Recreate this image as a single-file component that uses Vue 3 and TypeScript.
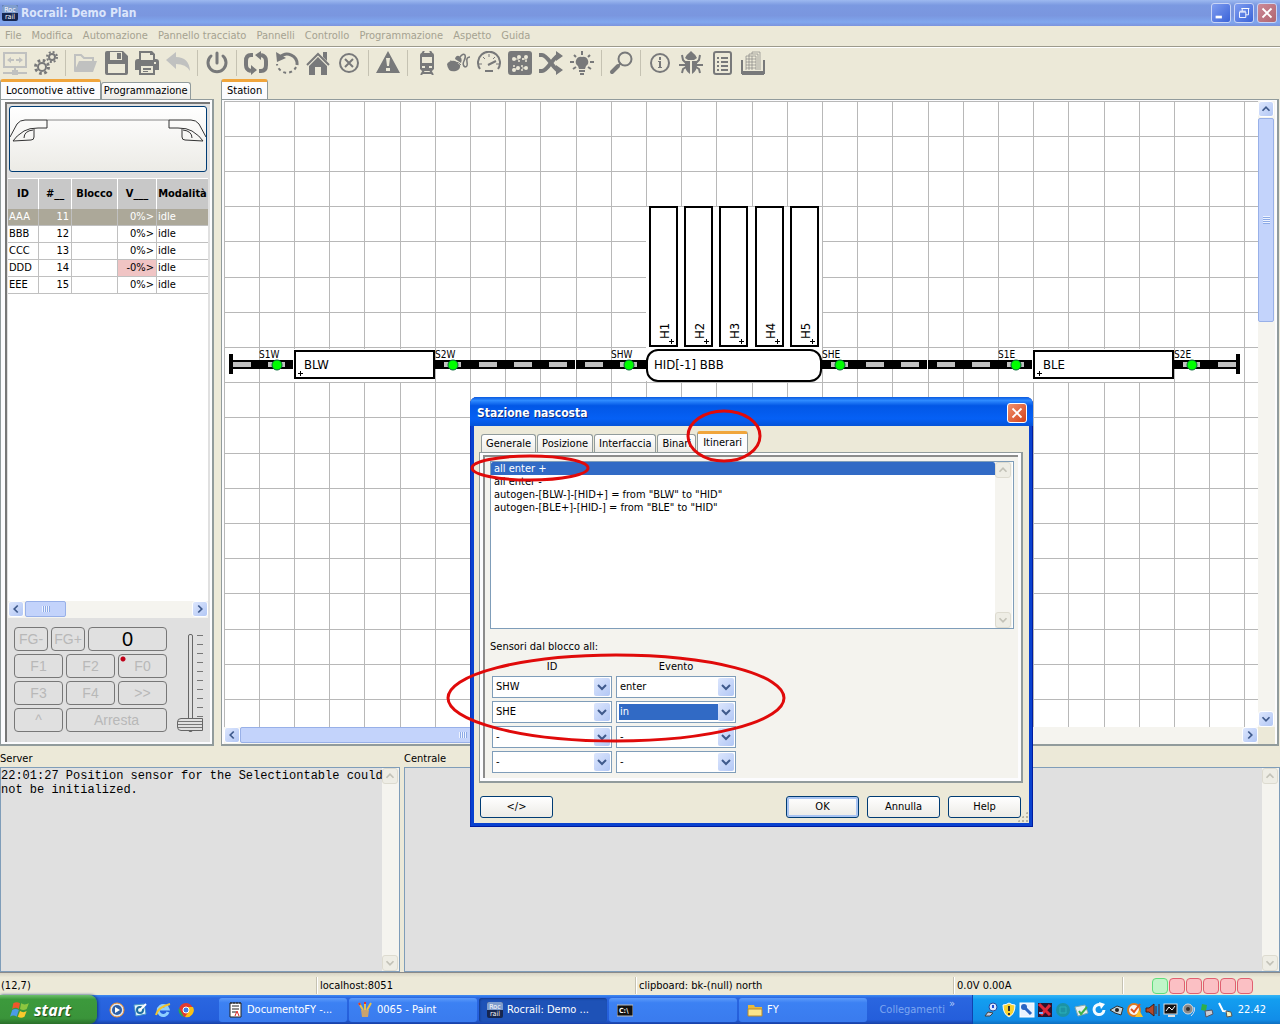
<script setup lang="ts">
import { ref } from 'vue'

interface Tool { name: string; art?: string; light?: boolean; sep?: boolean }
interface Loco { id: string; addr: number; block: string; v: string; mode: string; warn?: boolean }

const menus = ['File', 'Modifica', 'Automazione', 'Pannello tracciato', 'Pannelli', 'Controllo', 'Programmazione', 'Aspetto', 'Guida']

const line = 'fill="none" stroke="currentColor"'

const tools: Tool[] = [
  { name: 'Connetti', light: true, art: `<path ${line} stroke-width="2" d="M1 2h22v14H1zM12 16v5"/><path ${line} stroke-width="2" d="M0 22h24"/><rect x="9" y="19" width="6" height="5"/><path d="M4 9l4-3v2h3v2H8v2zM20 9l-4-3v2h-3v2h3v2z"/>` },
  { name: 'Impostazioni', art: `<circle cx="8" cy="16" r="4" ${line} stroke-width="2"/><circle cx="8" cy="16" r="6.500" ${line} stroke-width="3" stroke-dasharray="2.600 2.500"/><circle cx="18" cy="6" r="3" ${line} stroke-width="2"/><circle cx="18" cy="6" r="5" ${line} stroke-width="2" stroke-dasharray="2 1.930"/>` },
  { name: '', sep: true },
  { name: 'Apri', light: true, art: `<path ${line} stroke-width="2" d="M2 20V4h6l3 3h9v4"/><path d="M1 21l5-11h18l-4 11z"/>` },
  { name: 'Salva', art: `<path fill-rule="evenodd" d="M1 2q0-2 2-2h16l5 5v17q0 2-2 2H3q-2 0-2-2zM6 1v8h12V1zM4 13v9h17v-9z"/><path d="M13 2h4v6h-4z"/>` },
  { name: 'Stampa', art: `<path fill-rule="evenodd" d="M4 0h13l3 3v5h1q3 0 3 3v8h-4v5H4v-5H0v-8q0-3 3-3h1zM6 2v7h12V4h-3V2zM6 15v7h12v-7z"/><path d="M8 17h8v2H8zM8 20h5v1H8z"/><path fill="#ece9d8" d="M19 11h2v2h-2z"/>` },
  { name: 'Annulla', light: true, art: `<path d="M0 9l10-8v5q13 0 14 14-4-7-14-7v5z"/>` },
  { name: '', sep: true },
  { name: 'Alimentazione', art: `<path ${line} stroke-width="3" stroke-linecap="round" d="M6 5a9 9 0 1 0 12 0M12 2v10"/>` },
  { name: '', sep: true },
  { name: 'Modo automatico', art: `<path ${line} stroke-width="4" d="M9 4H7q-5 0-5 6v4q0 5 5 6M15 20h2q5 0 5-6v-4q0-5-5-6"/><path d="M7 14v10l6-5zM17 0v9l-6-5z"/>` },
  { name: 'Ripristina', art: `<path ${line} stroke-width="3" d="M5 6a10 10 0 0 1 17 8"/><path ${line} stroke-width="2" stroke-dasharray="3 3" d="M21 16a10 10 0 0 1-19-3"/><path d="M1 1l1 10 9-4z"/>` },
  { name: 'Casa', art: `<path ${line} stroke-width="2" d="M1 14L12 3l11 11"/><path d="M17 1h4v9l-4-4zM3 15l9-9 9 9v9h-6v-8H9v8H3z"/>` },
  { name: 'Stop', art: `<circle cx="12" cy="12" r="9" ${line} stroke-width="2"/><path ${line} stroke-width="2" d="M8 8l8 8M16 8l-8 8"/>` },
  { name: '', sep: true },
  { name: 'Emergenza', art: `<path fill-rule="evenodd" d="M12 0l12 22H0zM10 7l1 8h2l1-8zM10 17v3h4v-3z"/>` },
  { name: '', sep: true },
  { name: 'Locomotive', art: `<path ${line} stroke-width="2" d="M7 3l2-3M17 3l-2-3M6 24l3-5M18 24l-3-5M7 22h10"/><path fill-rule="evenodd" d="M7 2h10q2 0 2 2v14l-2 2H7l-2-2V4q0-2 2-2zM7 6v6h10V6zM7 15v2h3v-2zM14 15v2h3v-2z"/>` },
  { name: 'Mouse', art: `<path ${line} stroke-width="1.500" d="M14 6q3-4 5-2 1 2-1 6t1 6q3 0 2-5t3-5"/><path d="M1 13q3-4 8-3l5 4q1 4-4 6-8 2-9-7z"/><path d="M9 8q1-4 4-3 4 2 2 7z"/><path ${line} stroke="#ece9d8" d="M4 10l5 1q4 0 6 3M9 11q-2 2-2 5"/>` },
  { name: 'Velocità', art: `<path ${line} stroke-width="2" d="M3 18a11 11 0 1 1 18 0"/><path ${line} stroke-width="2" d="M11 14l8-4M8 20h8"/><path ${line} d="M2 13h3M6 6l2 2M12 3v3M18 6l-2 2M19 13h3"/>` },
  { name: 'Scambi', art: `<rect width="24" height="24" rx="3"/><g fill="#ece9d8"><circle cx="6" cy="8" r="2"/><circle cx="11" cy="6" r="2"/><circle cx="11" cy="10" r="1"/><circle cx="15" cy="8" r="1"/><circle cx="18" cy="6" r="2"/><circle cx="18" cy="10" r="1"/><circle cx="6" cy="15" r="1"/><circle cx="6" cy="19" r="2"/><circle cx="10" cy="17" r="2"/><circle cx="14" cy="15" r="1"/><circle cx="18" cy="17" r="2"/><circle cx="14" cy="19" r="1"/></g><path stroke="#ece9d8" d="M6 8h5M14 8h5M5 18h6M14 17h5"/>` },
  { name: 'Itinerari', art: `<path ${line} stroke-width="4" d="M0 4h3q3 0 9 8t8 8M0 20h3q3 0 9-8t8-8"/><path d="M17 0l7 5-7 5zM17 14l7 5-7 5z"/>` },
  { name: 'Luci', art: `<path d="M12 6a5 5 0 0 1 4 9l-1 3H9l-1-3a5 5 0 0 1 4-9zM9 19h6v2H9zM10 22h4v2h-4z"/><path ${line} stroke-width="2" d="M12 0v4M4 4l2 2M20 4l-2 2M0 11h4M20 11h4M3 18l3-2M21 18l-3-2"/>` },
  { name: '', sep: true },
  { name: 'Cerca', art: `<circle cx="16" cy="8" r="6.500" ${line} stroke-width="2"/><path ${line} stroke-width="4" stroke-linecap="round" d="M3 21l6-6"/><path ${line} stroke-width="2" d="M9 15l3-3"/>` },
  { name: '', sep: true },
  { name: 'Informazioni', art: `<circle cx="12" cy="12" r="9" ${line} stroke-width="2"/><path d="M11 6h2v3h-2zM10 10h3v6h1v1h-4v-1h1v-5h-1z"/>` },
  { name: 'Debug', art: `<path d="M6 7q1-3 4-5l2-2 2 2q3 2 4 5l-3 2H9zM6 10h5v13q-5-3-5-9zM13 10h5v4q0 6-5 9z"/><path ${line} stroke-width="2" d="M3 4l1 5 3 3M21 4l-1 5-3 3M0 14h7M17 14h7M3 22l1-4 3-2M21 22l-1-4-3-2"/>` },
  { name: 'Registro', art: `<rect x="4" y="1" width="17" height="22" rx="2" ${line} stroke-width="2"/><path ${line} stroke-width="2" stroke-dasharray="2 2 7 20" d="M7 7h11M7 11h11M7 15h11M7 19h11"/>` },
  { name: 'Documenti', art: `<path ${line} stroke-width="2" d="M1 9v13h22V9"/><path d="M1 20h22v4H1z"/><path ${line} stroke-width=".6" d="M5 19V5h10v14M8 5V3h9v16M11 3V1h8v18M5 8h10M5 11h10M5 14h10M5 17h10M8 5v14M11 5v14"/>` },
]

const locos: Loco[] = [
  { id: 'AAA', addr: 11, block: '', v: '0%>', mode: 'idle' },
  { id: 'BBB', addr: 12, block: '', v: '0%>', mode: 'idle' },
  { id: 'CCC', addr: 13, block: '', v: '0%>', mode: 'idle' },
  { id: 'DDD', addr: 14, block: '', v: '-0%>', mode: 'idle', warn: true },
  { id: 'EEE', addr: 15, block: '', v: '0%>', mode: 'idle' },
]

// Track plan: a cell is 35.2 px wide, snapped to whole pixels.
const cell = (n: number): number => Math.floor((n * 176) / 5)
const columns = Array.from({ length: 60 }, (_, i) => cell(i))
const rows = Array.from({ length: 40 }, (_, i) => cell(i))
const rails = [0, 7, 8, 9, 10, 18, 19, 20, 21, 28]
const sensors = [
  { id: 'S1W', at: 1 }, { id: 'S2W', at: 6 }, { id: 'SHW', at: 11 },
  { id: 'SHE', at: 17 }, { id: 'S1E', at: 22 }, { id: 'S2E', at: 27 },
]
const blocks = [{ id: 'BLW', at: 2 }, { id: 'BLE', at: 23 }]
const hidden = ['H1', 'H2', 'H3', 'H4', 'H5']

const dialogTabs = ['Generale', 'Posizione', 'Interfaccia', 'Binari', 'Itinerari']
const routes = ['all enter +', 'all enter -', 'autogen-[BLW-]-[HID+] = from "BLW" to "HID"', 'autogen-[BLE+]-[HID-] = from "BLE" to "HID"']
const route = ref(routes[0])
const sensorRows = ref([
  { id: 'SHW', event: 'enter' }, { id: 'SHE', event: 'in' }, { id: '-', event: '-' }, { id: '-', event: '-' },
])
const sensorIds = ['-', 'SHW', 'SHE']
const events = ['-', 'enter', 'in']
const speed = ref(0)
const serverLog = ref('22:01:27 Position sensor for the Selectiontable could\nnot be initialized.')
const centralLog = ref('')

const quick = [
  `<circle cx="8" cy="8" r="7" fill="#dfe9f5" stroke="#f08a24"/><circle cx="8" cy="8" r="5" fill="#2d5fa8"/><path d="M6 5l5 3-5 3z" fill="#fff"/>`,
  `<path d="M2 3l10-1 2 10-10 2z" fill="#e8f4fb" stroke="#4b9ac8"/><circle cx="8" cy="8" r="3" fill="none" stroke="#1c6da0" stroke-width="2"/><path d="M8 8l6-6" stroke="#fff" stroke-width="2"/>`,
  `<path d="M13 10a5 5 0 1 1 0-3H4" fill="none" stroke="#8fd0ff" stroke-width="3"/><path d="M1 13Q3 5 15 2" fill="none" stroke="#f3c52f" stroke-width="2"/>`,
  `<circle cx="8" cy="8" r="7" fill="#e33b2e"/><path d="M1 6l5 9a7 7 0 0 1-5-9z" fill="#2da94f"/><path d="M8 5h7a7 7 0 0 1-8 10l4-6z" fill="#fbc116"/><circle cx="8" cy="8" r="3" fill="#3f7fe8" stroke="#fff"/>`,
]

const rocrail = `<rect width="16" height="16" rx="2" fill="#16264f"/><path d="M0 8V2q0-2 2-2h12q2 0 2 2v6z" fill="#7f9dcd"/><text x="8" y="7" text-anchor="middle" font-size="7" fill="#fff">Roc</text><text x="8" y="14" text-anchor="middle" font-size="7" fill="#fff">rail</text>`

const tasks = [
  { label: 'DocumentoFY -...', art: `<path d="M3 1h11v14H3z" fill="#fff" stroke="#222"/><path d="M5 4h7M5 7h7M5 10h4" stroke="#222"/><path d="M8 14l2-5 2 5" fill="none" stroke="#d22"/><path d="M4 0v2M7 0v2M10 0v2M13 0v2" stroke="#222"/>` },
  { label: '0065 - Paint', art: `<path d="M4 8h8l-1 7H5z" fill="#c9a36c"/><path d="M6 8L2 1M8 8V1M10 8l4-7" stroke="#e9c24a" stroke-width="2"/><path d="M2 1l1 2M8 0v2" stroke="#d33" stroke-width="2"/>` },
  { label: 'Rocrail: Demo ...', art: rocrail, active: true },
  { label: '', art: `<rect y="3" width="16" height="11" fill="#111" stroke="#bbb"/><text x="2" y="11" font-size="7" font-weight="bold" fill="#fff">C:\\</text>` },
  { label: 'FY', art: `<path d="M1 3h6l1 2h7v9H1z" fill="#e8b93c"/><path d="M1 7h14v7H1z" fill="#fbe58c" stroke="#b8892a"/>` },
]

const tray = [
  `<circle cx="10" cy="5" r="4" fill="#dbe8ff" stroke="#234b9f"/><path d="M10 3v3" stroke="#1f4bd0" stroke-width="2"/><path d="M2 14l3-4 5 1-3 3z" fill="#c8cde0" stroke="#444"/>`,
  `<path d="M8 1q3 2 6 2 0 9-6 12-6-3-6-12 3 0 6-2z" fill="#f9d332" stroke="#fff"/><path d="M8 4v5M8 11v2" stroke="#333" stroke-width="2"/>`,
  `<rect x="1" y="1" width="14" height="14" fill="#e9f3ff" stroke="#fff"/><path d="M5 5l7 7" stroke="#2a66c4" stroke-width="3"/><circle cx="5" cy="5" r="3" fill="#2a66c4"/>`,
  `<rect x="1" y="1" width="14" height="14" fill="#2b1430"/><path d="M2 2l11 11M13 3L4 13" stroke="#e0293a" stroke-width="3"/><path d="M2 11h4" stroke="#7ab0ff" stroke-width="2"/>`,
  `<circle cx="8" cy="8" r="7" fill="#1c93a5"/><path d="M5 5h6v6H5z" fill="none" stroke="#2ab0b8"/>`,
  `<path d="M2 5l10-2 3 8-10 3z" fill="#e8eef0" stroke="#8aa"/><path d="M6 9l2 3 6-7" stroke="#3db14b" stroke-width="2" fill="none"/>`,
  `<path d="M13 8a5 5 0 1 1-3-5" fill="none" stroke="#f2fbff" stroke-width="3"/><path d="M8 0l6 2-4 5z" fill="#fff"/>`,
  `<path d="M1 8l7-4 6 2-2 7-6-2z" fill="#c4d4dc" stroke="#333"/><circle cx="8" cy="8" r="2" fill="#222"/>`,
  `<circle cx="7" cy="8" r="6" fill="#f4f4f4" stroke="#e07b1c" stroke-width="2"/><path d="M4 7l3 3 6-8" stroke="#e0531c" stroke-width="2" fill="none"/><path d="M8 15l4-7 4 7z" fill="#f9c32a"/>`,
  `<path d="M1 6h3l5-4v12l-5-4H1z" fill="#b4492a" stroke="#4a1a0c"/><path d="M11 4v8M14 2v12" stroke="#522"/>`,
  `<rect x="1" y="2" width="13" height="10" fill="#111" stroke="#ddd"/><path d="M3 9l3-4 3 3 3-4" stroke="#fff" fill="none"/><path d="M5 14h7" stroke="#ddd" stroke-width="2"/>`,
  `<circle cx="7" cy="7" r="5" fill="#888" stroke="#ddd"/><circle cx="7" cy="7" r="2" fill="#333"/><path d="M13 5q2 4-3 9" stroke="#dde" fill="none"/>`,
  `<path d="M3 2l5 1-1 6-5-1z" fill="#2fae48"/><path d="M6 9l7-1 1 4-7 3z" fill="#c9ccd4" stroke="#556"/>`,
  `<path d="M2 1l4 8q6 0 5 4" stroke="#fff" stroke-width="2" fill="none"/><path d="M9 9l5 1 1 4-5 1z" fill="#f2f2c0" stroke="#555"/>`,
]
</script>

<template>
  <div class="desktop">
    <svg class="defs" aria-hidden="true">
      <symbol id="up" viewBox="0 0 16 16"><path d="M4 10l4-4 4 4" fill="none" stroke="currentColor" stroke-width="2" /></symbol>
      <symbol id="down" viewBox="0 0 16 16"><path d="M4 6l4 4 4-4" fill="none" stroke="currentColor" stroke-width="2" /></symbol>
      <symbol id="left" viewBox="0 0 16 16"><path d="M10 4L6 8l4 4" fill="none" stroke="currentColor" stroke-width="2" /></symbol>
      <symbol id="right" viewBox="0 0 16 16"><path d="M6 4l4 4-4 4" fill="none" stroke="currentColor" stroke-width="2" /></symbol>
      <symbol id="lamp" viewBox="0 0 196 64"><path d="M0 30L7 17q3-4 8-4h22v8h-9q-9 0-14 3-8 5-11 10l18-1q3 0 3-3v-8M14 31q0-7 9-8" fill="none" stroke="#333" /></symbol>
    </svg>

    <header class="titlebar">
      <svg class="i16" viewBox="0 0 16 16" v-html="rocrail"></svg>
      <h1>Rocrail: Demo Plan</h1>
      <button class="win" aria-label="Riduci"><svg viewBox="0 0 20 20"><path d="M4 13h7v3H4z" fill="#fff" /></svg></button>
      <button class="win" aria-label="Ripristina"><svg viewBox="0 0 20 20"><path d="M8 8V5h7v7h-3M7 5h9" fill="none" stroke="#fff" /><path d="M5 9h7v6H5zM5 8h7" fill="none" stroke="#fff" /></svg></button>
      <button class="win close" aria-label="Chiudi"><svg viewBox="0 0 20 20"><path d="M5 5l10 10M15 5L5 15" stroke="#fff" stroke-width="2" /></svg></button>
    </header>

    <nav class="menubar"><button v-for="m in menus" :key="m">{{ m }}</button></nav>

    <div class="toolbar">
      <template v-for="(t, i) in tools" :key="i">
        <span v-if="t.sep" class="sep"></span>
        <button v-else :class="{ light: t.light }" :aria-label="t.name"><svg viewBox="0 0 24 24" fill="currentColor" v-html="t.art"></svg></button>
      </template>
    </div>

    <main class="work">
      <section class="side">
        <div class="tabs"><button class="tab on">Locomotive attive</button><button class="tab">Programmazione</button></div>
        <div class="frame">
          <div class="sunken">
            <div class="photo-row">
              <button class="photo" aria-label="Immagine locomotiva">
                <svg viewBox="0 0 196 64" fill="none">
                  <path d="M37 13h122" stroke="#888" />
                  <use href="#lamp" width="196" height="64" />
                  <use href="#lamp" width="196" height="64" transform="translate(196 0) scale(-1 1)" />
                </svg>
              </button>
            </div>
            <div class="table-box">
              <table class="locos">
                <colgroup><col class="c1" /><col class="c2" /><col class="c3" /><col class="c4" /><col class="c5" /></colgroup>
                <thead><tr><th>ID</th><th>#__</th><th>Blocco</th><th>V___</th><th>Modalità</th></tr></thead>
                <tbody>
                  <tr v-for="(l, i) in locos" :key="l.id" :class="{ sel: i === 0 }">
                    <td>{{ l.id }}</td><td class="num">{{ l.addr }}</td><td>{{ l.block }}</td><td class="num v" :class="{ warn: l.warn }">{{ l.v }}</td><td>{{ l.mode }}</td>
                  </tr>
                </tbody>
              </table>
            </div>
            <div class="hbar">
              <button class="sbtn" aria-label="Sinistra"><svg><use href="#left" /></svg></button>
              <span class="hthumb small"><i class="grip-h"></i></span><span class="fill"></span>
              <button class="sbtn" aria-label="Destra"><svg><use href="#right" /></svg></button>
            </div>
            <div class="throttle">
              <div class="keys">
                <div class="krow"><button class="k s">FG-</button><button class="k s">FG+</button><output class="k wide">0</output></div>
                <div class="krow"><button class="k">F1</button><button class="k">F2</button><button class="k led">F0</button></div>
                <div class="krow"><button class="k">F3</button><button class="k">F4</button><button class="k">&gt;&gt;</button></div>
                <div class="krow"><button class="k">^</button><button class="k stop">Arresta</button></div>
              </div>
              <div class="slider">
                <input v-model="speed" type="range" min="0" max="100" aria-label="Velocità" />
                <i class="ticks"></i>
              </div>
            </div>
          </div>
        </div>
      </section>

      <section class="plan-pane">
        <div class="tabs"><button class="tab on">Station</button></div>
        <div class="frame plan-frame">
          <div class="plan-row">
            <svg class="plan">
              <g stroke="#b8b8b8" shape-rendering="crispEdges">
                <line v-for="x in columns" :key="'c' + x" :x1="x" :x2="x" y1="0" y2="100%" />
                <line v-for="y in rows" :key="'r' + y" :y1="y" :y2="y" x1="0" x2="100%" />
              </g>
              <g shape-rendering="crispEdges">
                <rect :x="cell(12)" y="106" :width="cell(17) - cell(12)" height="174" fill="#fff" />
                <rect x="8" y="259" width="1006" height="9" />
                <rect x="5" y="253" width="4" height="20" />
                <rect x="1012" y="253" width="4" height="20" />
                <rect v-for="r in rails" :key="r" :x="cell(r) + 9" y="261" width="18" height="5" fill="#c0c0c0" />
                <rect x="351" y="259" width="1" height="9" fill="#fff" />
                <rect x="703" y="259" width="1" height="9" fill="#fff" />
              </g>
              <g v-for="s in sensors" :key="s.id">
                <rect :x="cell(s.at) + 9" y="261" width="17" height="5" fill="#c0c0c0" />
                <circle :cx="cell(s.at) + 18" cy="264" r="5" fill="#0f0" stroke="#063" />
                <text :x="cell(s.at)" y="257" class="tiny">{{ s.id }}</text>
              </g>
              <g v-for="b in blocks" :key="b.id">
                <rect :x="cell(b.at) - 1" y="248" width="142" height="33" fill="#fff" />
                <rect :x="cell(b.at) + 1" y="250" width="139" height="27" fill="#fff" stroke="#000" stroke-width="2" />
                <text :x="cell(b.at) + 10" y="268" class="big">{{ b.id }}</text>
                <path :d="`M${cell(b.at) + 4} 272h5m-3-2v5`" stroke="#000" shape-rendering="crispEdges" />
              </g>
              <g v-for="(h, i) in hidden" :key="h">
                <rect :x="cell(12 + i) + 4" y="106" width="27" height="139" fill="#fff" stroke="#000" stroke-width="2" />
                <text :transform="`translate(${cell(12 + i) + 23} 238) rotate(-90)`" class="big">{{ h }}</text>
                <path :d="`M${cell(12 + i) + 23} 240h5m-3-2v5`" stroke="#000" shape-rendering="crispEdges" />
              </g>
              <rect x="423" y="249" width="174" height="31" rx="11" fill="#fff" stroke="#000" stroke-width="2" />
              <text x="430" y="268" class="big">HID[-1] BBB</text>
            </svg>
            <div class="vbar">
              <button class="sbtn" aria-label="Su"><svg><use href="#up" /></svg></button>
              <span class="vthumb"><i class="grip-v"></i></span><span class="fill"></span>
              <button class="sbtn" aria-label="Giù"><svg><use href="#down" /></svg></button>
            </div>
          </div>
          <div class="plan-foot">
            <div class="hbar">
              <button class="sbtn" aria-label="Sinistra"><svg><use href="#left" /></svg></button>
              <span class="hthumb long"><i class="grip-h"></i></span><span class="fill"></span>
              <button class="sbtn" aria-label="Destra"><svg><use href="#right" /></svg></button>
            </div>
            <span class="corner"></span>
          </div>
        </div>
      </section>
    </main>

    <section class="consoles">
      <div class="console server">
        <label for="server">Server</label>
        <div class="log">
          <textarea id="server" v-model="serverLog" readonly></textarea>
          <div class="vbar off"><button class="sbtn" disabled aria-label="Su"><svg><use href="#up" /></svg></button><span class="fill"></span><button class="sbtn" disabled aria-label="Giù"><svg><use href="#down" /></svg></button></div>
        </div>
      </div>
      <div class="console central">
        <label for="central">Centrale</label>
        <div class="log">
          <textarea id="central" v-model="centralLog" readonly></textarea>
          <div class="vbar off"><button class="sbtn" disabled aria-label="Su"><svg><use href="#up" /></svg></button><span class="fill"></span><button class="sbtn" disabled aria-label="Giù"><svg><use href="#down" /></svg></button></div>
        </div>
      </div>
    </section>

    <footer class="status">
      <span class="s1">(12,7)</span><span class="s2">localhost:8051</span><span class="s3">clipboard: bk-(null) north</span><span class="s4">0.0V 0.00A</span>
      <span class="leds"><i v-for="n in 6" :key="n" :class="{ ok: n === 1 }"></i></span>
    </footer>

    <div class="taskbar">
      <button class="start">
        <svg viewBox="0 0 18 18"><path d="M3 3q3-2 6 0L8 8Q5 6 2 8z" fill="#f0562b" /><path d="M10 3q3 2 7 0l-2 5q-3 2-6 0z" fill="#8dc63f" /><path d="M2 9q3-2 6 0l-2 6q-3-2-6 0z" fill="#4b9be8" /><path d="M9 10q3 2 6 0l-2 5q-3 2-6 0z" fill="#fbc92d" /></svg>
        <span>start</span>
      </button>
      <div class="quick"><button v-for="(q, i) in quick" :key="i" :aria-label="'Avvio ' + (i + 1)"><svg class="i16" viewBox="0 0 16 16" v-html="q"></svg></button></div>
      <div class="tasks">
        <button v-for="t in tasks" :key="t.label" class="task" :class="{ active: t.active }"><svg class="i16" viewBox="0 0 16 16" v-html="t.art"></svg><span>{{ t.label }}</span></button>
      </div>
      <span class="links">Collegamenti</span><span class="more">»</span>
      <div class="tray"><svg v-for="(t, i) in tray" :key="i" class="i16" viewBox="0 0 16 16" v-html="t"></svg><time>22.42</time></div>
    </div>

    <div class="dialog" role="dialog" aria-labelledby="dlg-title">
      <div class="dtitle"><h2 id="dlg-title">Stazione nascosta</h2><button class="win close" aria-label="Chiudi finestra"><svg viewBox="0 0 20 20"><path d="M5 5l10 10M15 5L5 15" stroke="#fff" stroke-width="2" /></svg></button></div>
      <div class="dbody">
        <div class="tabs dtabs"><button v-for="t in dialogTabs" :key="t" class="tab" :class="{ on: t === 'Itinerari' }">{{ t }}</button></div>
        <div class="page">
          <div class="page-in">
            <div class="listbox">
              <select v-model="route" size="12" aria-label="Itinerari"><option v-for="r in routes" :key="r">{{ r }}</option></select>
              <div class="vbar off"><button class="sbtn" disabled aria-label="Su"><svg><use href="#up" /></svg></button><span class="fill"></span><button class="sbtn" disabled aria-label="Giù"><svg><use href="#down" /></svg></button></div>
            </div>
            <p class="caption">Sensori dal blocco all:</p>
            <div class="sensors">
              <span id="h-id" class="head">ID</span><span id="h-ev" class="head">Evento</span>
              <template v-for="(s, i) in sensorRows" :key="i">
                <span class="combo"><select v-model="s.id" aria-labelledby="h-id"><option v-for="o in sensorIds" :key="o">{{ o }}</option></select><svg><use href="#down" /></svg></span>
                <span class="combo" :class="{ focus: i === 1 }"><select v-model="s.event" aria-labelledby="h-ev"><option v-for="o in events" :key="o">{{ o }}</option></select><svg><use href="#down" /></svg></span>
              </template>
            </div>
          </div>
        </div>
        <div class="actions"><button class="btn">&lt;/&gt;</button><span class="fill"></span><button class="btn default">OK</button><button class="btn">Annulla</button><button class="btn">Help</button></div>
      </div>
      <i class="sizer"></i>
    </div>

    <svg class="marks" aria-hidden="true" fill="none" stroke="#e00a0a" stroke-width="3">
      <ellipse cx="724" cy="436" rx="36" ry="25" />
      <ellipse cx="530" cy="468" rx="58" ry="12" />
      <ellipse cx="616" cy="698" rx="168" ry="43" />
    </svg>
  </div>
</template>

<style>
body { margin: 0; }
</style>

<style scoped>
.desktop, .desktop :deep(*) { box-sizing: border-box; }
.desktop { position: relative; display: flex; flex-direction: column; min-height: 100vh; overflow: hidden; background: #ece9d8; color: #000; font: 11px/14px "DejaVu Sans Condensed", "Noto Sans", sans-serif; }
button, select, textarea { font: inherit; color: inherit; margin: 0; padding: 0; border: 0; background: none; }
svg { display: block; flex: none; }
.defs { position: absolute; width: 0; height: 0; }
.i16 { width: 16px; height: 16px; }
.fill { flex: 1; }

.titlebar { display: flex; align-items: center; height: 26px; padding: 0 3px 0 2px; gap: 3px; background: linear-gradient(#9db9f0, #7b99e1 20%, #7a96df 60%, #80a7ee 85%, #7b93dd); }
.titlebar h1 { flex: 1; margin: 0; font-size: 12px; line-height: 16px; color: #dbe5fb; }
.win { width: 20px; height: 20px; border: 1px solid #c9d5f6; border-radius: 3px; background: linear-gradient(135deg, #7f9df0, #3a63d8); }
.win svg { width: 18px; height: 18px; }
.win.close { background: linear-gradient(135deg, #cc8a98, #b0656f); }

.menubar { display: flex; align-items: center; gap: 10px; height: 20px; padding: 0 5px; color: #a5a291; }
.toolbar { display: flex; align-items: center; gap: 7px; height: 33px; padding: 0 3px; border-top: 1px solid #9c9a8c; box-shadow: inset 0 1px #fff; color: #78797a; }
.toolbar button { width: 24px; height: 24px; }
.toolbar svg { width: 24px; height: 24px; }
.toolbar .light { color: #c0c1c0; }
.sep { width: 1px; height: 26px; background: #c5c2b2; }

.work { flex: 1; display: flex; gap: 7px; padding-right: 1px; }
.side { width: 214px; display: flex; flex-direction: column; }
.plan-pane { flex: 1; min-width: 0; display: flex; flex-direction: column; }
.tabs { display: flex; align-items: flex-end; height: 20px; }
.tab { height: 17px; padding: 0 2px; border: 1px solid #919b9c; border-bottom: 0; border-radius: 3px 3px 0 0; background: linear-gradient(#fff, #ecebe6); white-space: nowrap; }
.tab.on { position: relative; height: 20px; padding: 0 5px; border-top: 3px solid #f0a53c; background: #fcfcfe; }
.frame { flex: 1; display: flex; flex-direction: column; border: 1px solid #919b9c; border-width: 1px 2px 2px 1px; background: #fcfcfe; padding: 2px; min-height: 0; }
.sunken { flex: 1; display: flex; flex-direction: column; margin-left: 2px; padding: 0 2px 0 1px; border-left: 2px solid #777; border-top: 2px solid #777; background: #e0e0e0; }
.photo-row { padding: 2px 1px 6px; }
.photo { display: block; width: 198px; height: 66px; border: 1px solid #003c74; border-radius: 3px; background: linear-gradient(#fff, #ecebe6); }
.photo svg { width: 196px; height: 64px; }
.table-box { flex: 1; width: 200px; overflow: hidden; background: #fff; }
.locos { width: 201px; table-layout: fixed; border-collapse: separate; border-spacing: 0; }
.c1 { width: 31px; } .c2 { width: 33px; } .c3 { width: 46px; } .c4 { width: 39px; } .c5 { width: 52px; }
.locos th { height: 31px; padding: 0; background: #c8c8c8; border-right: 1px solid #fff; border-top: 1px solid #fff; white-space: nowrap; overflow: hidden; }
.locos td { height: 17px; padding: 0 2px 0 1px; line-height: 16px; border-right: 1px solid #c0c0c0; border-bottom: 1px solid #c0c0c0; white-space: nowrap; }
.locos .num { text-align: right; }
.locos .warn { background: #f0c4c4; }
.locos .sel td { background: #aca899; color: #fff; }

.hbar { display: flex; flex: none; height: 17px; background: #f5f4ef; }
.vbar { display: flex; flex: none; flex-direction: column; width: 17px; background: #f5f4ef; }
.sbtn { flex: none; width: 16px; height: 16px; border: 1px solid #fff; border-radius: 3px; background: linear-gradient(135deg, #dce6fd, #b2c7f5); color: #3f5a8c; }
.sbtn svg { width: 14px; height: 14px; }
.off .sbtn { background: #eeede5; border-color: #dddbd0; color: #c3c2b8; }
.hthumb, .vthumb { display: flex; align-items: center; justify-content: center; border: 1px solid #98b0e8; border-radius: 2px; background: #c3d3fb; }
.hthumb.small { width: 41px; margin-left: 1px; height: 16px; }
.hthumb.long { width: 445px; height: 16px; }
.vthumb { width: 16px; height: 204px; margin-top: 1px; }
.grip-h { width: 8px; height: 6px; background: repeating-linear-gradient(90deg, #eef3ff 0 1px, #8caae6 1px 2px); }
.grip-v { width: 7px; height: 8px; background: repeating-linear-gradient(#eef3ff 0 1px, #8caae6 1px 2px); }

.throttle { display: flex; padding: 9px 5px 10px 6px; gap: 10px; }
.keys { display: flex; flex-direction: column; gap: 3px; }
.krow { display: flex; gap: 3px; }
.k { display: block; width: 49px; height: 24px; border: 1px solid #777; border-radius: 4px; font: 14px/22px "Liberation Sans", Arial, sans-serif; color: #b8b8b8; text-align: center; }
.k.s { width: 34px; }
.k.wide { width: 79px; color: #000; font-size: 20px; }
.k.stop { width: 101px; }
.k.led { background: radial-gradient(circle at 4px 4px, #c00018 0 2px, transparent 3px); }
.slider { position: relative; width: 26px; height: 98px; margin-top: 7px; }
.slider input { appearance: none; writing-mode: vertical-lr; direction: rtl; display: block; width: 26px; height: 98px; margin: 0; background: none; }
.slider input::-webkit-slider-runnable-track { width: 5px; background: #e0e0e0; border: 1px solid #666; border-radius: 2px; }
.slider input::-webkit-slider-thumb { appearance: none; width: 26px; height: 13px; margin-left: -12px; border: 1px solid #666; border-radius: 4px 0 0 4px; background: repeating-linear-gradient(#e0e0e0 0 2px, #777 2px 3px); }
.ticks { position: absolute; left: 20px; top: 1px; width: 6px; height: 84px; background: repeating-linear-gradient(#777 0 1px, transparent 1px 9px); }

.plan-frame { padding: 1px 2px 0 2px; }
.plan-row { flex: 1; display: flex; min-height: 0; }
.plan { flex: 1; min-width: 0; height: auto; background: #fff; }
.plan-foot { display: flex; }
.plan-foot .hbar { flex: 1; }
.corner { width: 17px; background: #ece9d8; }
.tiny { font-size: 10px; }
.big { font-size: 13px; }

.consoles { display: flex; gap: 4px; height: 227px; padding-top: 6px; border-bottom: 1px solid #8a8a8a; }
.console { display: flex; flex-direction: column; }
.server { width: 400px; }
.central { flex: 1; }
.log { flex: 1; display: flex; margin-top: 1px; border: 1px solid #7f9db9; background: #e0e0e0; }
.log textarea { flex: 1; min-width: 0; padding: 1px 0; overflow: hidden; resize: none; white-space: pre; font: 12px/14px "Liberation Mono", "Courier New", monospace; outline: 0; }

.status { display: flex; align-items: center; height: 22px; padding-top: 3px; background: linear-gradient(#d8d5c5, #ece9d8 20%); }
.status span { padding-left: 3px; }
.status .s1 { width: 317px; padding-left: 1px; }
.s1, .s2, .s3, .s4 { height: 17px; line-height: 17px; border-right: 1px solid #c5c2b2; box-shadow: 1px 0 #fff; }
.s2 { width: 319px; } .s3 { width: 318px; } .s4 { width: 169px; }
.leds { display: flex; flex: 1; justify-content: flex-end; gap: 1px; padding-right: 27px; }
.leds i { width: 16px; height: 16px; border: 1px solid #e06070; border-radius: 4px; background: #fbc0c4; }
.leds .ok { border-color: #5fdc7c; background: #c0f5c8; }

.taskbar { display: flex; align-items: center; height: 29px; color: #fff; background: linear-gradient(#3f8cf3, #2a66e0 10%, #245edb 85%, #1941a5); }
.start { display: flex; align-items: center; gap: 4px; width: 97px; height: 29px; padding-left: 10px; border-radius: 0 8px 8px 0; background: linear-gradient(#6cbf6c, #3c9a3c 15%, #3a943a 80%, #2a6f2a); box-shadow: 1px 0 3px #123a7a; }
.start svg { width: 20px; height: 20px; }
.start span { font: italic bold 16px/20px "Open Sans", sans-serif; text-shadow: 1px 1px 1px #1d4d1d; }
.quick { display: flex; gap: 7px; width: 122px; padding-left: 12px; }
.tasks { display: flex; flex: 1; gap: 2px; }
.task { display: flex; align-items: center; gap: 4px; flex: 0 1 128px; min-width: 0; height: 24px; padding: 0 8px; border-radius: 3px; background: linear-gradient(#5c9bfa, #3c81f3 20%, #3a7bee); white-space: nowrap; }
.task.active { background: #1e52b7; box-shadow: inset 1px 1px 2px #123a8c; }
.links { color: #7da6f0; }
.more { align-self: flex-start; width: 27px; padding: 2px 0 0 4px; color: #b5cdf8; }
.tray { display: flex; align-items: center; gap: 2px; height: 29px; width: 308px; padding: 0 14px 0 10px; border-left: 1px solid #1042af; background: linear-gradient(#35b5f5, #139ef0 15%, #118de8 85%, #0e6fc0); }
.tray time { flex: 1; text-align: right; }

.dialog { position: absolute; left: 470px; top: 397px; display: flex; flex-direction: column; width: 563px; height: 430px; padding: 0 4px 4px; border-radius: 7px 7px 0 0; background: #0a42cf; box-shadow: inset -1px -1px #001ca0, inset 1px 0 #0a2fb8; }
.dtitle { display: flex; align-items: center; height: 29px; margin: 0 -4px; padding: 3px 6px 0 7px; border-radius: 7px 7px 0 0; background: linear-gradient(#0a5ae0, #2f8bff 12%, #0257e6 30%, #0560f5 75%, #0453d8); }
.dtitle h2 { flex: 1; margin: 0; font-size: 12px; line-height: 16px; color: #fff; text-shadow: 1px 1px #0a2a80; }
.dtitle .close { border-color: #fff; background: linear-gradient(135deg, #f0916d, #d3421a); }
.dbody { flex: 1; display: flex; flex-direction: column; padding: 5px 6px 5px 5px; background: #ece9d8; }
.dtabs { height: 21px; padding-left: 2px; gap: 1px; }
.dtabs .tab { height: 18px; padding: 0 4px; }
.dtabs .tab.on { height: 21px; padding: 0 5px; }
.page { border: 1px solid #919b9c; border-width: 1px 2px 2px 1px; padding: 2px 3px 3px; background: #fcfcfe; }
.page-in { height: 323px; padding: 4px 4px 0 5px; border-left: 2px solid #8c8c8c; border-top: 2px solid #8c8c8c; background: #f4f3ee; }
.listbox { display: flex; width: 100%; height: 168px; padding-right: 1px; border: 1px solid #7f9db9; background: #fff; }
.listbox select { flex: 1; min-width: 0; overflow: hidden; outline: 0; padding: 0 0 1px; }
.listbox option { height: 13px; min-height: 0; padding: 0 3px; line-height: 13px; }
.listbox option:checked { background: linear-gradient(#316ac5, #316ac5); -webkit-text-fill-color: #fff; }
.caption { margin: 11px 0 7px; }
.sensors { display: grid; grid-template-columns: 120px 120px; gap: 3px 4px; padding-left: 2px; }
.head { text-align: center; line-height: 12px; }
.combo { position: relative; display: block; height: 22px; border: 1px solid #7f9db9; background: #fff; }
.combo select { appearance: none; display: block; width: 99px; height: 16px; margin: 2px; padding: 0 1px; line-height: 16px; outline: 0; }
.combo svg { position: absolute; right: 1px; top: 1px; width: 16px; height: 18px; border-radius: 2px; background: linear-gradient(135deg, #dce6fd, #b2c7f5); color: #3f5a8c; pointer-events: none; }
.combo.focus select { background: #316ac5; color: #fff; }
.actions { display: flex; gap: 8px; margin-top: auto; padding: 0 2px 0 1px; }
.btn { width: 73px; height: 22px; border: 1px solid #003c74; border-radius: 3px; background: linear-gradient(#fff, #ecebe6); }
.btn.default { box-shadow: inset 0 0 0 2px #a9c4f2; }
.sizer { position: absolute; right: 5px; bottom: 5px; width: 11px; height: 11px; background: radial-gradient(circle at 2px 2px, #b8b4a2 0 1px, transparent 1px) 0 0 / 4px 4px; clip-path: polygon(100% 0, 100% 100%, 0 100%); }

.marks { position: absolute; left: 0; top: 0; width: 100%; height: 100%; pointer-events: none; }
</style>
